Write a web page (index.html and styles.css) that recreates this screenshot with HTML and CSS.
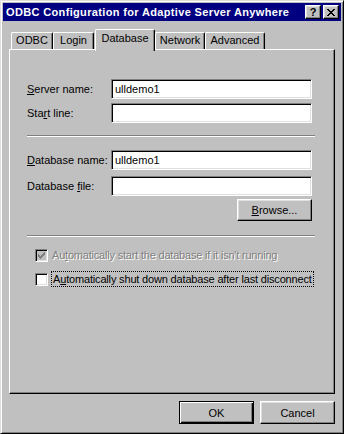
FILE: index.html
```html
<!DOCTYPE html>
<html>
<head>
	<title>ODBC Configuration for Adaptive Server Anywhere</title>
	<meta charset="utf-8">
	<link rel="stylesheet" href="styles.css">
</head>
<body>

	<div class="window">

		<div class="titlebar">
			<span class="title">ODBC Configuration for Adaptive Server Anywhere</span>
			<span class="capbtn help">?</span>
			<span class="capbtn close">
				<svg width="8" height="7" viewBox="0 0 8 7" shape-rendering="crispEdges">
					<rect x="0" y="0" width="2" height="1"/><rect x="6" y="0" width="2" height="1"/>
					<rect x="1" y="1" width="2" height="1"/><rect x="5" y="1" width="2" height="1"/>
					<rect x="2" y="2" width="4" height="1"/>
					<rect x="3" y="3" width="2" height="1"/>
					<rect x="2" y="4" width="4" height="1"/>
					<rect x="1" y="5" width="2" height="1"/><rect x="5" y="5" width="2" height="1"/>
					<rect x="0" y="6" width="2" height="1"/><rect x="6" y="6" width="2" height="1"/>
				</svg>
			</span>
		</div>

		<div class="dlgbody">

			<!-- tab strip -->
			<div class="tabs">
				<div class="tab tab-odbc">ODBC</div>
				<div class="tab tab-login">Login</div>
				<div class="tab tab-db active">Database</div>
				<div class="tab tab-net">Network</div>
				<div class="tab tab-adv">Advanced</div>
			</div>

			<div class="panel">

				<div class="row">
					<span class="lbl"><u>S</u>erver name:</span>
					<div class="edit">ulldemo1</div>
				</div>
				<div class="row row-2">
					<span class="lbl">Sta<u>r</u>t line:</span>
					<div class="edit"></div>
				</div>

				<div class="sep sep-1"></div>

				<div class="row">
					<span class="lbl"><u>D</u>atabase name:</span>
					<div class="edit">ulldemo1</div>
				</div>
				<div class="row row-4">
					<span class="lbl">Database <u>f</u>ile:</span>
					<div class="edit"></div>
				</div>
				<div class="browse-row">
					<div class="btn btn-browse"><u>B</u>rowse...</div>
				</div>

				<div class="sep sep-2"></div>

				<div class="check disabled">
					<span class="box">
						<svg width="7" height="7" viewBox="0 0 7 7" shape-rendering="crispEdges">
							<path d="M6 0h1v3h-1zM5 1h1v3h-1zM4 2h1v3h-1zM3 3h1v3h-1zM2 4h1v3h-1zM1 3h1v3h-1zM0 2h1v3h-1z" fill="#808080"/>
						</svg>
					</span>
					<span class="check-text">Au<u>t</u>omatically start the database if it isn't running</span>
				</div>
				<div class="check check-2">
					<span class="box"></span>
					<span class="check-text focus">A<u>u</u>tomatically shut down database after last disconnect</span>
				</div>

			</div><!-- closes panel -->

			<div class="buttons">
				<div class="btn default">OK</div>
				<div class="btn">Cancel</div>
			</div>

		</div>

	</div><!-- closes window -->

</body>
</html>
```

FILE: styles.css
```css
body
{
	margin: 0;
	background: #c0c0c0;
	font: 11px "Liberation Sans", Arial, sans-serif;
	color: #000;
}

u
{
	text-underline-offset: 1px;
}

.window
{
	width: 344px;
	height: 434px;
	box-sizing: border-box;
	border: 1px solid;
	border-color: #dfdfdf #000 #000 #dfdfdf;
	box-shadow: inset 1px 1px #fff, inset -1px -1px #808080;
	padding: 2px;
	display: flex;
	flex-direction: column;
	background: #c0c0c0;
}

/* caption bar */
.titlebar
{
	height: 18px;
	background: #000080;
	color: #fff;
	display: flex;
	align-items: center;
	padding: 0 2px 0 3px;
	gap: 2px;
}

.title
{
	flex: 1;
	font-weight: bold;
	letter-spacing: 0.35px;
	white-space: nowrap;
}

.capbtn
{
	width: 16px;
	height: 14px;
	box-sizing: border-box;
	border: 1px solid;
	border-color: #fff #000 #000 #fff;
	box-shadow: inset -1px -1px #808080, inset 1px 1px #dfdfdf;
	background: #c0c0c0;
	color: #000;
	display: flex;
	align-items: center;
	justify-content: center;
}

.help
{
	font-weight: bold;
	font-size: 11px;
	line-height: 12px;
}

.close svg
{
	display: block;
	fill: #000;
}

/* dialog body */
.dlgbody
{
	flex: 1;
	padding: 0 6px;
	display: flex;
	flex-direction: column;
}

.tabs
{
	height: 20px;
	margin-top: 8px;
	padding-left: 2px;
	display: flex;
	align-items: flex-end;
}

.tab
{
	height: 17px;
	box-sizing: border-box;
	border: 1px solid;
	border-bottom: none;
	border-color: #fff #000 #000 #fff;
	border-radius: 2px 2px 0 0;
	box-shadow: inset -1px 0 #808080;
	text-align: center;
	line-height: 15px;
	background: #c0c0c0;
}

.tab-odbc { width: 42px; }
.tab-login { width: 41px; }
.tab-db { width: 60px; margin-left: 1px; }
.tab-net { width: 50px; }
.tab-adv { width: 60px; }

.tab.active
{
	height: 22px;
	margin-bottom: -2px;
	line-height: 16px;
	position: relative;
	z-index: 1;
}

.panel
{
	height: 345px;
	box-sizing: border-box;
	border: 1px solid;
	border-color: #fff #000 #000 #fff;
	box-shadow: inset -1px -1px #808080;
	padding: 29px 0 0 17px;
}

.row
{
	display: flex;
	align-items: center;
	height: 20px;
}

.row-2 { margin-top: 4px; }
.row-4 { margin-top: 6px; }

.lbl
{
	width: 84px;
	white-space: nowrap;
}

.edit
{
	width: 201px;
	height: 20px;
	box-sizing: border-box;
	border: 1px solid;
	border-color: #808080 #fff #fff #808080;
	box-shadow: inset 1px 1px #000, inset -1px -1px #dfdfdf;
	background: #fff;
	padding-left: 3px;
	line-height: 18px;
}

.sep
{
	width: 288px;
	border-top: 1px solid #808080;
	border-bottom: 1px solid #fff;
}

.sep-1 { margin: 12px 0 13px 0; }
.sep-2 { margin: 14px 0 10px 0; }

.browse-row
{
	width: 285px;
	display: flex;
	justify-content: flex-end;
	margin-top: 3px;
}

.btn
{
	width: 75px;
	height: 23px;
	box-sizing: border-box;
	border: 1px solid;
	border-color: #fff #000 #000 #fff;
	box-shadow: inset -1px -1px #808080, inset 1px 1px #dfdfdf;
	display: flex;
	align-items: center;
	justify-content: center;
}

.btn-browse
{
	height: 22px;
}

.btn.default
{
	border-color: #000;
	box-shadow: inset 1px 1px #fff, inset -1px -1px #000, inset -2px -2px #808080;
}

.buttons
{
	display: flex;
	justify-content: flex-end;
	gap: 6px;
	margin-top: 7px;
}

/* check boxes */
.check
{
	display: flex;
	align-items: center;
	height: 16px;
	padding-left: 8px;
	white-space: nowrap;
}

.check-2 { margin-top: 8px; }

.box
{
	width: 13px;
	height: 13px;
	box-sizing: border-box;
	border: 1px solid;
	border-color: #808080 #fff #fff #808080;
	box-shadow: inset 1px 1px #000, inset -1px -1px #dfdfdf;
	background: #fff;
	margin-right: 4px;
	display: flex;
	align-items: center;
	justify-content: center;
}

.disabled .box
{
	background: #c0c0c0;
}

.box svg
{
	display: block;
}

.check-text
{
	letter-spacing: -0.17px;
}

.disabled .check-text
{
	color: #808080;
	text-shadow: 1px 1px #fff;
	letter-spacing: -0.2px;
}

.focus
{
	outline: 1px dotted #000;
	padding: 1px 1px 1px 1px;
}
```
